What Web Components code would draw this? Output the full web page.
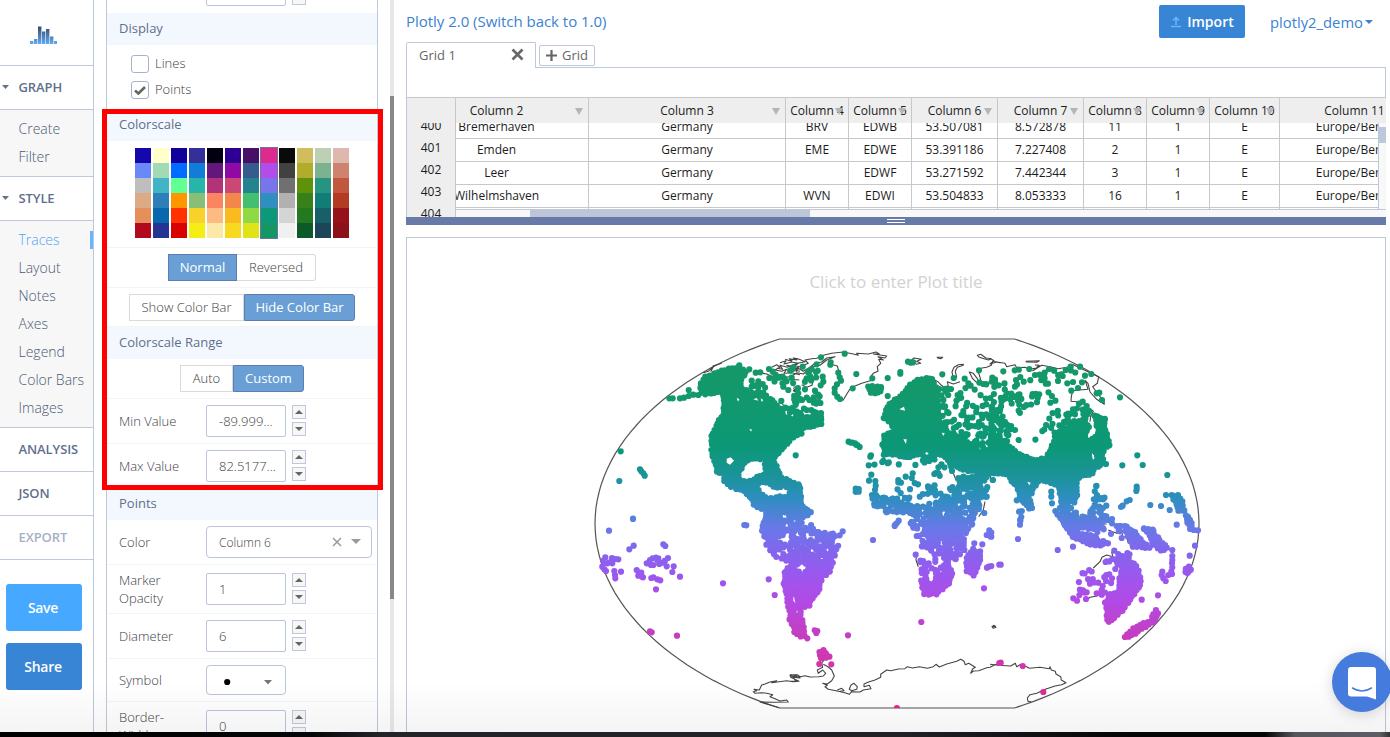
<!DOCTYPE html>
<html lang="en">
<head>
<meta charset="utf-8">
<title>Plotly 2.0</title>
<style>
html,body{margin:0;height:100%;overflow:hidden;background:#fff;font-family:"Open Sans","Noto Sans",sans-serif}
</style>
</head>
<body>
<plot-workspace></plot-workspace>
<script>
const define = (name, html, setup) => customElements.define(name, class extends HTMLElement {
  constructor() {
    super();
    this.attachShadow({ mode: 'open' });
  }
  connectedCallback() {
    const t = document.createElement('template');
    t.innerHTML = typeof html === 'function' ? html(this) : html;
    this.shadowRoot.replaceChildren(t.content.cloneNode(true));
    if (setup) setup(this);
  }
});

/* ---------- left navigation ---------- */
define('nav-head', el => `
<style>
:host{display:flex;align-items:center;box-sizing:border-box;height:44px;padding-bottom:2px;border-bottom:1px solid #bdc8d9;background:#fff;color:#5f6f8d;font-size:13px;font-weight:600;letter-spacing:-.1px}
:host([muted]){color:#a6b1c6}
i{width:18.500px;flex:none;display:flex}
svg{margin:2px 0 0 1px}
</style><i>${el.hasAttribute('open') ? '<svg width="9" height="5"><path d="M1 0h7L4.500 4z" fill="#64748f"/></svg>' : ''}</i><slot></slot>`);

define('nav-item', `
<style>
:host{display:flex;align-items:center;justify-content:space-between;height:28px;padding-left:18.500px;color:#4b5a76;font-size:14px;font-weight:300;white-space:nowrap}
:host([active]){color:#4fa4fb}
span{padding-bottom:2px}
i{width:3px;height:18px;flex:none}
:host([active]) i{background:#69b3ff}
</style><span><slot></slot></span><i></i>`);

define('nav-list', `
<style>:host{display:block;padding:5px 0;background:#f7f7f7;border-bottom:1px solid #bdc8d9}</style><slot></slot>`);

define('side-nav', `
<style>
:host{display:block;box-sizing:border-box;width:94px;border-right:1px solid #bdc8d9;height:732px;overflow:hidden;flex:none}
.logo{height:65px;border-bottom:1px solid #bdc8d9;box-sizing:content-box}
.logo svg{display:block;margin-left:30px;padding-top:25px}
button{display:block;width:76px;height:47px;margin:0 0 12px 6px;padding:0 2px 0 0;border:0;border-radius:3px;color:#fff;font:600 14px "Open Sans",sans-serif;letter-spacing:-.3px;background:#46a8ff}
button:first-of-type{margin-top:24px}
.share{background:#3985d5}
</style>
<div class="logo"><svg width="27" height="20" viewBox="0 0 27 20"><defs><linearGradient id="b" gradientUnits="userSpaceOnUse" x1="0" y1="2" x2="0" y2="19"><stop offset="0" stop-color="#3a4d70"/><stop offset="1" stop-color="#62aaf2"/></linearGradient></defs>
<path fill="url(#b)" d="M0 16h3.400v3H0zM4 14h3.400v5H4zM8 1.500h3.400V19H8zM12 6.500h3.400V19H12zM16 4h3.400v15H16zM20 11.500h3.400V19H20zM24 16h3v3h-3z"/></svg></div>
<nav-head open>GRAPH</nav-head>
<nav-list><nav-item>Create</nav-item><nav-item>Filter</nav-item></nav-list>
<nav-head open>STYLE</nav-head>
<nav-list><nav-item active>Traces</nav-item><nav-item>Layout</nav-item><nav-item>Notes</nav-item><nav-item>Axes</nav-item><nav-item>Legend</nav-item><nav-item>Color Bars</nav-item><nav-item>Images</nav-item></nav-list>
<nav-head>ANALYSIS</nav-head><nav-head>JSON</nav-head><nav-head muted>EXPORT</nav-head>
<button>Save</button><button class="share">Share</button>`);

/* ---------- style panel controls ---------- */
define('panel-head', `
<style>:host{display:flex;align-items:center;box-sizing:border-box;height:32px;padding:0 0 2px 12px;background:#f3f8fe;color:#5f6f8d;font-size:13px}</style><slot></slot>`);

define('panel-row', el => `
<style>
:host{display:flex;box-sizing:border-box;align-items:center;height:var(--h,45px);border-bottom:1px solid #f3f4f5;padding-left:12px;color:#3c4046;font-size:13px;font-weight:300}
:host([center]){padding:0;justify-content:center}
label{width:87px;flex:none;line-height:18px}
</style>${el.hasAttribute('label') ? `<label>${el.getAttribute('label')}</label>` : ''}<slot></slot>`);

define('number-box', el => `
<style>
:host{display:flex;gap:6px;align-items:flex-start}
.v{box-sizing:border-box;width:80px;height:32px;border:1px solid #bac5dc;border-radius:2px;background:#fff;padding-left:12px;line-height:31px;font-size:13px;color:#404040}
.s{display:flex;flex-direction:column;gap:3px}
.s i{display:flex;align-items:center;justify-content:center;box-sizing:border-box;width:14px;height:14px;border:1px solid #c0c9dc;background:#f7f7f7}
</style><div class="v">${el.getAttribute('value')}</div><div class="s"><i><svg width="8" height="4"><path d="M0 4h8L4 0z" fill="#666"/></svg></i><i><svg width="8" height="4"><path d="M0 0h8L4 4z" fill="#666"/></svg></i></div>`);

define('check-box', el => `
<style>
:host{display:flex;align-items:center;height:26px;padding-left:24px;color:#3c4046;font-size:13px;font-weight:300}
i{display:flex;align-items:center;justify-content:center;box-sizing:border-box;width:18px;height:18px;border:1px solid #a5b3cb;border-radius:3px;margin-right:6px}
span{padding-bottom:2px}
</style><i>${el.hasAttribute('checked') ? '<svg width="12" height="9"><path d="M1 4.500 4.400 7.500 11 1" fill="none" stroke="#666" stroke-width="2.600"/></svg>' : ''}</i><span><slot></slot></span>`);

define('toggle-pair', el => {
  const [a, b, wa, wb, on] = el.getAttribute('spec').split('|');
  return `<style>
:host{display:flex;height:27px;font-size:13px;line-height:25px;text-align:center;color:#404040}
span{box-sizing:border-box;border:1px solid #dadada;background:#fff;font-weight:300}
span:first-child{border-radius:3px 0 0 3px;border-right:0}span:last-child{border-radius:0 3px 3px 0;border-left:0}
span.on{background:#699fd5;border:1px solid #5d7cb0;color:#fff;font-weight:400}
</style><span style="width:${wa}px" class="${on == 0 ? 'on' : ''}">${a}</span><span style="width:${wb}px" class="${on == 1 ? 'on' : ''}">${b}</span>`;
});

define('color-scales', () => {
  const scales = ['#1408ad #6889f7 #bebebe #dcaa85 #e5905a #b00a1c','#ffffcb #a1dab4 #41b5c5 #2c7fb8 #0768ac #253393','#110099 #006cff #62ff94 #ff9600 #ff3200 #d90000','#352f9a #127cd9 #27b5a9 #87bf77 #f9d12b #f5ee14','#020010 #63177d #b13478 #fb8461 #febb81 #fce9a9','#2d0093 #8f09a4 #cb4876 #f38749 #fbba20 #f9d822','#451065 #365c8d #25838e #44bf71 #8fd944 #dfe318','#de2a8c #b24deb #7874eb #2e8fc1 #0c9879 #149764','#0a0a0a #414141 #707070 #b1b1b1 #d5d5d5 #f0f0f0','#d0bd5d #b1ac29 #5e920b #37801a #247820 #0d5a29','#bdcfb5 #7cb38e #279381 #117d76 #195f69 #1c455a','#deb7ae #cf826e #c1583d #b33b23 #96111a #8d1119'];
  return `<style>
:host{display:flex;gap:2px;height:90px;padding:0;margin-top:-3px}
div{width:16px;display:flex;flex-direction:column}
i{flex:1}
.sel{box-shadow:0 0 0 1px #66769c}
</style>` + scales.map((s, n) => `<div class="${n === 7 ? 'sel' : ''}">${s.split(' ').map(c => `<i style="background:${c}"></i>`).join('')}</div>`).join('');
});

define('select-box', el => `
<style>
:host{display:flex;align-items:center;box-sizing:border-box;width:80px;height:30px;border:1px solid #bac5dc;border-radius:4px;background:#fff;padding:0 12px 0 17px;justify-content:space-between}
:host([wide]){width:166px;height:32px;padding:0 10px 0 12px;font-size:12px;color:#404040}
div{display:flex;gap:9px;align-items:center}
</style>${el.hasAttribute('wide') ? '<slot></slot><div><svg width="10" height="10"><path d="M1 1l8 8M9 1L1 9" stroke="#999" stroke-width="1.500"/></svg><svg width="10" height="7"><path d="M0 0h10L5 5z" fill="#999"/></svg></div>' : '<svg width="8" height="8" style="margin-top:3px"><circle cx="3.200" cy="4" r="3.100"/></svg><svg width="10" height="5" style="margin-top:5px"><path d="M1 0h8L5 4.500z" fill="#777"/></svg>'}`);

define('style-panel', `
<style>
:host{display:block;position:relative;width:300px;margin-left:12px;height:732px;flex:none;overflow:visible}
.view{height:732px;overflow:hidden;display:flex;justify-content:space-between}
.col{box-sizing:border-box;width:272px;border:solid #bdc8d9;border-width:0 1px}
.track{width:4px;margin-right:12px;background:#e8e8e8;flex:none}
.track i{display:block;margin-top:96px;height:503px;background:#888}
.checks{height:64px;box-sizing:border-box;padding-top:6px}
.first{height:13px;display:flex;align-items:flex-end}
.first number-box{margin:0 0 7px 99px}
.callout{position:absolute;left:-4px;top:109px;width:281px;height:381px;border:5px solid #fe0000;box-sizing:border-box}
</style>
<div class="view"><div class="col">
<div class="first"><number-box value=""></number-box></div>
<panel-head>Display</panel-head>
<div class="checks"><check-box>Lines</check-box><check-box checked>Points</check-box></div>
<panel-head>Colorscale</panel-head>
<panel-row center style="--h:107px"><color-scales></color-scales></panel-row>
<panel-row center style="--h:40px"><toggle-pair spec="Normal|Reversed|69|79|0"></toggle-pair></panel-row>
<panel-row center style="--h:39px"><toggle-pair spec="Show Color Bar|Hide Color Bar|115|111|1"></toggle-pair></panel-row>
<panel-head>Colorscale Range</panel-head>
<panel-row center style="--h:40px"><toggle-pair spec="Auto|Custom|53|71|1"></toggle-pair></panel-row>
<panel-row label="Min Value"><number-box value="-89.999..."></number-box></panel-row>
<panel-row label="Max Value" style="--h:44px"><number-box value="82.5177..."></number-box></panel-row>
<panel-head>Points</panel-head>
<panel-row label="Color"><select-box wide>Column 6</select-box></panel-row>
<panel-row label="Marker&lt;br>Opacity" style="--h:49px"><number-box value="1"></number-box></panel-row>
<panel-row label="Diameter"><number-box value="6"></number-box></panel-row>
<panel-row label="Symbol" style="--h:43px"><select-box></select-box></panel-row>
<panel-row label="Border-&lt;br>Width" style="--h:49px"><number-box value="0"></number-box></panel-row>
</div><div class="track"><i></i></div></div>
<div class="callout"></div>`);

/* ---------- header and data grid ---------- */
define('top-bar', `
<style>
:host{display:flex;align-items:center;height:42px;box-sizing:border-box;padding:1px 13px 0 0;color:#3b82d2;font-size:14.800px}
.t{flex:1;font-size:15px;letter-spacing:-.03px;padding-bottom:2px}
button{display:flex;align-items:center;justify-content:center;gap:5px;width:86px;height:33px;margin:0 25px 0 0;padding:0;border:0;border-radius:2px;background:#3985d5;color:#fff;font:600 14px "Open Sans",sans-serif}
.u{display:flex;align-items:center;gap:2px}
</style>
<span class="t">Plotly 2.0 (Switch back to 1.0)</span>
<button><svg width="12" height="12"><path d="M1 10.500h10M6 9V2M3 4.500 6 1.500 9 4.500" fill="none" stroke="#6db5fb" stroke-width="1.500"/></svg>Import</button>
<span class="u">plotly2_demo<svg width="8" height="4"><path d="M0 0h8L4 4z" fill="#3b82d2"/></svg></span>`);

define('grid-tabs', `
<style>
:host{display:flex;height:26px;align-items:flex-end;font-size:13px;color:#666}
.a{display:flex;justify-content:space-between;align-items:center;box-sizing:border-box;width:130px;height:26px;border:1px solid #bdc8d9;border-bottom:0;border-radius:2px 2px 0 0;padding:0 11px 2px 12px}
.g{flex:1;display:flex;height:26px;box-sizing:border-box;border-bottom:1px solid #bdc8d9;padding:3px 0 0 3px}
.b{display:flex;align-items:center;gap:5px;box-sizing:border-box;width:56px;height:21px;border:1px solid #bdc8d9;border-radius:2px;padding:0 0 1px 6px}
</style>
<div class="a">Grid 1<svg width="13" height="13"><path d="M1.500 1.500l10 10M11.500 1.500l-10 10" stroke="#666" stroke-width="2.600"/></svg></div>
<div class="g"><div class="b"><svg width="11" height="11"><path d="M5.500 0v11M0 5.500h11" stroke="#666" stroke-width="2.200"/></svg>Grid</div></div>`);

define('data-grid', () => {
  const cols = [184, 197, 63, 63, 86, 86, 63, 63, 70, 150];
  const rows = [['Bremerhaven','Germany','BRV','EDWB','53.507081','8.572878','11','1','E','Europe/Berlin'],['Emden','Germany','EME','EDWE','53.391186','7.227408','2','1','E','Europe/Berlin'],['Leer','Germany','','EDWF','53.271592','7.442344','3','1','E','Europe/Berlin'],['Wilhelmshaven','Germany','WVN','EDWI','53.504833','8.053333','16','1','E','Europe/Berlin'],['','','','','','','','','','']];
  return `<style>
:host{display:flex;flex-direction:column;height:157px;font-size:12px;color:#1c1c1c}
.bar{height:29px;border:solid #bdc8d9;border-width:0 1px}
.table{height:120px;display:grid;grid-template:26px 86px 8px/50px 1fr;overflow:hidden}
.corner,.head{background:#eee;border-top:1px solid #c8c8c8}
.corner,.idx{border-left:1px solid #bdc8d9;border-right:1px solid #c8c8c8;background:#eee}
.head,.body{overflow:hidden;min-width:0}
.line{display:grid;grid-template-columns:${cols.map(c => c + 'px').join(' ')};margin-left:-51px;width:1025px}
.line span{box-sizing:border-box;border-right:1px solid #c8c8c8;text-align:center;white-space:nowrap;position:relative}
.head .line{height:26px;line-height:26px}
.head svg{position:absolute;right:5px;top:10px}
.body{display:grid;grid-template-columns:1fr 8px}
.cells{overflow:hidden;min-width:0}
.cells .line{height:23px;line-height:23px}
.cells .line span{border-bottom:1px solid #c8c8c8}
.cells .line:first-child{margin-top:-8px}
.idx{grid-row:2/4;grid-column:1;overflow:hidden;text-align:center}
.idx div{height:22px;line-height:22px}
.idx div:first-child{margin-top:-8px}
.vs{box-sizing:border-box;border-left:1px solid #bdc8d9;background:#f8f8f8;padding-top:4px}
.vs i{display:block;height:16px;background:#bdc8d9}
.hs{box-sizing:border-box;border-top:1px solid #bdc8d9;background:#f8f8f8}
.hs i{display:block;width:280px;height:8px;margin-left:74px;background:#bdc6d8}
.split{height:8px;background:#687ba8;display:flex;flex-direction:column;align-items:center;gap:2px}
.split i{width:18px;height:1px;background:#fff}
.split i:first-child{margin-top:2px}
</style>
<div class="bar"></div>
<div class="table"><div class="corner"></div>
<div class="head"><div class="line">${cols.map((c, n) => `<span>Column ${n + 2}<svg width="8" height="7"><path d="M0 0h8L4 7z" fill="#b5b5b5"/></svg></span>`).join('')}</div></div>
<div class="idx">${[400, 401, 402, 403, 404].map(n => `<div>${n}</div>`).join('')}</div>
<div class="body"><div class="cells">${rows.map(r => `<div class="line">${r.map(v => `<span>${v}</span>`).join('')}</div>`).join('')}</div><div class="vs"><i></i></div></div>
<div class="hs"><i></i></div></div>
<div class="split"><i></i><i></i></div>`;
});

/* ---------- world map, Winkel tripel projection ---------- */
define('geo-scatter', `
<style>:host{display:block}svg{display:block}</style>
<svg width="978" height="495" viewBox="407 238 978 495">
<defs><linearGradient id="lat" gradientUnits="userSpaceOnUse" x1="0" y1="345" x2="0" y2="710">
<stop offset="0" stop-color="#179862"/><stop offset=".28" stop-color="#0c9877"/><stop offset=".36" stop-color="#1b939a"/><stop offset=".42" stop-color="#2e8ec0"/><stop offset=".5" stop-color="#6879e8"/><stop offset=".56" stop-color="#8166ed"/><stop offset=".63" stop-color="#9b57ee"/><stop offset=".7" stop-color="#b14ae6"/><stop offset=".8" stop-color="#c63dbf"/><stop offset=".9" stop-color="#d832a6"/><stop offset="1" stop-color="#e0288a"/></linearGradient></defs>
<path id="frame" fill="none" stroke="#555" stroke-width="1.200"/>
<path id="coast" fill="none" stroke="#444" stroke-width="1.100" stroke-linejoin="round"/>
<path id="solid" fill="url(#lat)"/>
<path id="gaps" fill="#fff"/>
<path id="dots" fill="url(#lat)"/>
</svg>`, el => {
  const $ = id => el.shadowRoot.getElementById(id);
  /* each sheet has its own origin; three units make one pixel */
  const O = { A: [580, 330], B: [790, 330], C: [990, 330], D: [580, 520], E: [790, 520], F: [990, 520] };
  const pts = s => { const o = O[s[0]]; return s.slice(1).trim().split(/\s+/).map(p => { const [x, y] = p.split(',').map(Number); return [o[0] + x / 3, o[1] + y / 3]; }); };
  const path = (p, close) => 'M' + p.map(q => q[0].toFixed(1) + ' ' + q[1].toFixed(1)).join('L') + (close ? 'Z' : '');
  let seed = 7;
  const rnd = () => (seed = (seed * 16807) % 2147483647) / 2147483647;
  let dots = '';
  const dot = (x, y) => { dots += `M${(x - 3.1).toFixed(1)} ${y.toFixed(1)}a3.1 3.1 0 1 0 6.200 0a3.1 3.1 0 1 0 -6.200 0`; };

  const frame = [];
  const edge = (lon, lat) => { const a = Math.acos(Math.cos(lat) * Math.cos(lon / 2)), k = a ? a / Math.sin(a) : 1; return [897 + 117.46 * .5 * (lon * 2 / Math.PI + 2 * Math.cos(lat) * Math.sin(lon / 2) * k), 523.5 - 117.46 * .5 * (lat + Math.sin(lat) * k)]; };
  for (let i = 0; i <= 60; i++) frame.push(edge(Math.PI, (90 - i * 3) * Math.PI / 180));
  for (let i = 60; i >= 0; i--) frame.push(edge(-Math.PI, (90 - i * 3) * Math.PI / 180));
  $('frame').setAttribute('d', path(frame, true));

  const solids = [
    'A365,158 378,142 402,130 435,120 478,110 496,126 482,150 485,175 520,190 548,190 570,205 598,235 610,260 640,268 662,250 662,312 640,322 610,348 598,370 576,390 606,440 655,462 662,475 662,510 650,560 640,540 615,548 600,545 600,600 545,600 558,560 557,542 522,525 517,505 480,478 455,472 435,455 430,430 412,425 404,392 396,370 396,320 407,290 431,255 431,200 425,183 380,190 362,176',
    'B0,463 16,465 22,500 36,530 62,548 40,560 0,560 0,540 14,540 8,500 0,500',
    'B0,270 30,268 75,258 92,250 92,282 60,288 20,302 0,314',
    'B362,165 385,152 410,143 425,148 437,170 442,200 445,240 452,290 475,310 500,322 540,340 570,365 600,355 632,340 632,425 600,430 560,425 520,420 480,400 460,374 430,372 408,352 395,370 360,382 320,375 282,368 279,345 284,317 312,302 303,278 280,262 292,232 312,210 340,193',
    'C0,330 40,335 85,370 130,390 170,385 188,345 195,310 240,290 278,268 296,290 280,330 285,345 305,362 322,370 320,400 306,432 275,435 262,450 262,495 252,516 240,512 225,540 208,535 218,525 203,465 150,448 128,475 118,500 128,535 118,536 95,510 82,470 50,433 0,430',
    'C314,258 342,268 345,300 360,346 340,352 336,398 325,410 323,390 333,362 302,345 294,332 328,318 325,300',
    'F240,38 300,45 325,60 350,70 330,76 290,70 250,50',
    'F405,35 418,28 436,36 450,60 478,84 455,82 430,82 416,50', 'F462,28 488,35 510,60 532,85 512,90 490,75 478,45',
    'F392,165 430,130 445,150 454,185 442,210 398,270 356,306 350,298 355,275 345,250 360,222 385,215 388,185',
    'F405,349 430,327 485,300 496,270 502,278 494,302 455,328 415,350', 'F585,146 597,140 603,150 593,160 585,156',
    'C545,498 565,495 577,515 583,540 567,540 556,515', 'C588,555 600,570 608,598 599,598',
    'E392,180 430,195 440,172 470,160 482,170 475,190 438,222 405,224',
    'E530,115 548,88 558,100 572,92 570,120 550,166 530,152',
    'D620,160 640,150 660,180 660,350 645,335 634,285 620,235 612,190',
    'E0,170 40,165 60,140 122,140 118,156 96,170 86,205 70,235 56,255 30,262 36,310 45,345 30,342 0,300',
    'E88,398 102,392 118,408 95,416', 'B235,168 275,170 272,185 245,190', 'B174,334 193,338 208,350', 'B198,477 207,477 207,487 198,487'
  ];
  /* inland waters and thinly served pockets; the first three are ringed with dots */
  const gaps = [
    'A472,444 486,404 515,386 555,388 560,428 532,442 500,456', 'A526,462 548,454 590,472 644,472 648,498 600,500 562,508 540,490', 'B386,362 405,342 434,370 408,384',
    'A597,548 606,560 616,560 612,548', 'A622,550 634,558 636,570 625,568',
    'A490,152 500,165 498,180 486,176', 'A520,208 530,204 535,212', 'A542,205 550,210 545,216', 'A470,203 478,208 474,215', 'A440,386 452,382 462,392 450,404 440,398', 'A508,298 515,298 514,305',
    'B328,238 342,230 345,242', 'B340,328 350,328 348,342', 'B455,308 465,308 460,318', 'B430,380 470,384 478,402 440,398', 'B495,432 510,450 500,460', 'C305,368 322,368 320,388 308,388', 'C112,455 122,458 118,466', 'C305,300 325,300 322,318 308,318',
    'E408,178 420,180 416,195', 'D625,200 636,196 636,212', 'E20,180 30,178 28,205 20,200', 'E5,235 12,230 16,250', 'D640,165 652,165 648,185', 'E22,255 30,270 20,280'
  ];
  $('solid').setAttribute('d', solids.map(s => path(pts(s), true)).join(''));
  $('gaps').setAttribute('d', gaps.map(s => path(pts(s), true)).join(''));
  solids.concat(gaps.slice(0, 3)).forEach(s => { const p = pts(s); p.forEach((a, i) => { const b = p[(i + 1) % p.length], l = Math.hypot(b[0] - a[0], b[1] - a[1]), n = Math.ceil(l / 4.5); for (let k = 0; k < n; k++) dot(a[0] + (b[0] - a[0]) * k / n + rnd() * 1.6 - .8, a[1] + (b[1] - a[1]) * k / n + rnd() * 1.6 - .8); }); });

  const inside = (p, x, y) => { let c = false; for (let i = 0, j = p.length - 1; i < p.length; j = i++) if ((p[i][1] > y) !== (p[j][1] > y) && x < (p[j][0] - p[i][0]) * (y - p[i][1]) / (p[j][1] - p[i][1]) + p[i][0]) c = !c; return c; };
  /* [coverage, outline]: airports scattered over thinly served land */
  [
    [1, 'B445,180 480,170 540,215 630,240 632,345 570,355 500,320 455,290'],
    [.5, 'B450,165 540,155 600,160 632,200 632,250 540,220 480,215 445,190'],
    [.65, 'C0,190 60,190 130,180 200,185 215,215 290,220 300,260 250,270 235,290 160,300 140,260 100,260 60,300 20,330 0,330'],
    [.32, 'C0,120 75,120 120,115 225,120 270,110 280,160 240,180 130,175 60,185 0,190'],
    [.25, 'C60,300 200,290 185,320 140,340 80,340'],
    [1, 'C0,250 50,260 60,320 90,365 60,360 0,340'],
    [.9, 'C240,240 300,240 290,280 230,290 200,300 200,260'],
    [.9, 'B240,385 290,370 320,385 290,405 240,410'],
    [.6, 'B320,385 430,385 490,400 500,425 440,415 370,418 320,405'],
    [.3, 'B325,435 450,430 450,500 340,490 300,470'],
    [3, 'B236,480 250,472 280,500 330,505 350,520 385,540 385,560 345,548 290,550 255,532'],
    [2.3, 'B355,525 400,530 450,545 455,600 365,600 352,578 380,560'],
    [2.4, 'B450,490 490,470 500,440 595,435 590,500 560,560 545,600 450,600'],
    [.9, 'B320,490 440,480 450,540 390,540'],
    [2.4, 'E358,5 540,5 528,40 528,95 500,85 440,60 385,50'],
    [1.6, 'E380,45 440,55 528,80 520,100 500,125 492,165 470,165 430,170 400,185 385,120'],
    [3, 'D548,0 655,0 660,20 600,50 605,100 600,125 565,88 540,40'],
    [1.4, 'D600,40 660,20 660,170 610,165 603,100'],
    [1.7, 'E0,0 60,10 110,28 152,45 135,90 125,148 50,150 0,170'],
    [1.8, 'E80,35 152,45 130,140 105,110'],
    [1.8, 'D625,100 660,110 660,200 615,200'],
    [.9, 'F270,145 310,145 308,175 295,215 265,235 250,240 262,190'],
    [.45, 'F310,160 385,165 385,205 340,228 300,225'],
    [1.8, 'F372,92 402,92 428,90 440,130 445,150 395,170 380,130'], [1.8, 'F320,130 385,105 380,135'],
    [2.4, 'F210,0 290,-15 330,0 340,25 300,30 240,38 230,20'],
    [.9, 'F310,0 345,0 350,40 390,10 410,30 400,60 320,50'],
    [2.6, 'C195,545 240,525 268,560 280,575 320,580 320,600 230,600 208,572'],
    [2, 'C310,450 322,458 328,485 350,500 352,540 350,575 300,590 275,575 290,552 312,530'],
    [2.2, 'C82,538 96,538 95,585 86,585'],
    [.8, 'A500,140 560,160 560,185 520,190 505,175'],
    [.5, 'A560,125 650,140 640,200 575,160'],
    [1.1, 'A595,215 660,190 660,260 610,250'],
    [.7, 'B0,200 90,190 95,250 40,265 0,270'],
    [.5, 'B0,110 90,120 90,160 30,190 0,170']
  ].forEach(([c, s]) => {
    const p = pts(s), xs = p.map(q => q[0]), ys = p.map(q => q[1]);
    let area = 0; p.forEach((a, i) => { const b = p[(i + 1) % p.length]; area += a[0] * b[1] - b[0] * a[1]; });
    let n = Math.round(Math.abs(area / 2) * c / 29), x0 = Math.min(...xs), x1 = Math.max(...xs), y0 = Math.min(...ys), y1 = Math.max(...ys);
    while (n > 0) { const x = x0 + rnd() * (x1 - x0), y = y0 + rnd() * (y1 - y0); if (inside(p, x, y)) { dot(x, y); n--; } }
  });
  [
    'A268,205 278,205 300,205 312,203 326,180 326,198 340,194 355,195 365,188 376,193 122,364 118,453 180,418 184,424 190,430 194,437 159,566 87,602 493,585 499,586 647,376 376,140 508,118 527,128 541,127 567,117 578,125 568,144 597,143 608,140 635,143 610,170 625,180 515,152 515,170 530,165 548,162 418,428 403,393 450,120 478,106',
    'B38,110 58,122 78,126 80,103 93,82 122,97 121,104 50,145 98,140 100,155 92,166 75,182 45,178 25,190 15,215 58,210 50,240 70,245 145,128 149,142 153,152 141,163 134,175 134,188 142,200 150,207 188,175 199,132 247,145 164,71 293,198 293,144 331,126 331,131 354,95 362,98 370,97 457,133 491,144 524,146 567,121 607,143 615,155 448,177 465,180 483,177 17,376 243,376 241,380 236,406 244,434 237,452 256,453 257,467 325,450 325,457 347,440 368,430 384,463 414,469 437,429 433,432 445,430 583,549 598,601 548,567 590,500 609,450 318,582 326,572 314,588',
    'C40,124 74,121 118,117 177,117 164,128 162,138 91,141 101,155 15,148 26,166 75,170 50,190 38,210 242,110 227,120 214,133 270,110 285,137 304,132 276,157 264,174 244,182 232,160 249,156 320,190 328,188 336,210 390,202 278,215 290,228 298,243 345,268 442,376 397,406 458,405 532,435 348,402 440,470 439,483 440,478 393,531 398,527 410,514 419,510 481,525 513,528 539,540 560,584 528,495 545,495 80,511 184,485 184,500 186,520 196,543 8,450 366,567 380,588 392,588 404,588 410,590 462,595 475,597 488,599',
    'D494,15 87,32 159,-3 161,77 148,88 250,73 256,78 67,140 73,148 78,153 76,112 70,122 82,130 96,114 108,117 115,118 97,130 88,127 103,153 105,165 106,175 123,155 170,150 178,160 184,158 175,167 186,170 189,172 200,130 208,128 210,120 218,115 228,113 235,115 213,135 220,135 232,120 238,132 248,128 255,122 264,114 260,139 281,139 277,156 300,170 214,174 220,172 232,178 241,181 228,208 429,190 210,334 215,337 291,347 566,178 584,225',
    'E158,34 249,60 320,10 314,16 394,306 174,346 74,331 82,333 79,339 88,432 124,433 105,398 52,355 582,205 591,143 596,140 604,138 553,70 577,73 598,33 590,45 602,50 600,40 628,134 628,429 377,104 380,48',
    'F4,38 4,50 84,57 90,0 90,14 32,134 4,138 203,90 249,80 354,70 376,147 358,163 366,175 348,183 325,188 290,217 320,220 335,224 261,242 250,235 288,237 455,239 504,226 615,77 599,107 624,31 547,90 547,108 547,120 546,130 547,142 544,155 546,162 535,165 517,155 515,165 520,175 527,183 605,25 598,10 592,3 612,30 560,14 462,25 32,428 98,438 160,516 353,0 366,10'
  ].forEach(s => pts(s).forEach(p => dot(p[0], p[1])));
  dots += 'M893.800 708.100a3.100 3.100 0 1 1 6.200 0z';
  $('dots').setAttribute('d', dots);

  $('coast').setAttribute('d', [
    'D598,563 540,546 580,547 625,546 620,540 600,543 585,536 570,530 578,524 560,520 545,518 525,520 520,515 530,512 522,508 538,510 545,495 555,492 570,486 590,482 575,488 620,482 640,485 657,484 632,472 630,465 645,472 652,464 660,470',
    'E0,464 20,464 5,470 24,470 30,474 10,472 15,480 25,484 0,484', 'E25,472 45,467 60,471 85,470 100,468 107,460 98,450 85,460 82,450 98,442 95,430 102,420', 'E100,433 115,441 125,450 133,468 125,482 112,492 98,490 112,496 105,500 115,508 145,514 165,518 178,523 185,515 210,516 220,510 243,506 238,496 222,500 222,492 238,485 255,480 272,472 272,463 290,450 302,452 325,447 345,446 352,440 368,444 388,440 412,445 430,440 438,433 448,441 470,432 500,424 512,418 522,424 526,434 536,430 556,442 548,446 542,460 550,453 566,452 590,443 600,442 615,434 630,432',
    'E178,508 183,495 192,490 202,500 200,508 185,512Z', 'E142,510 155,505 162,512 150,514', 'E606,320 612,316 618,322 610,325Z', 'E606,320 618,319', 'E380,100 378,120 385,140', 'E0,300 12,330 35,350',
    'F0,433 25,436 62,438 76,430 80,440 90,434 110,440 118,445 150,442 178,446 180,440 184,450 196,454 198,462 212,470 214,480 228,488 215,494 195,498 168,507 140,520 120,524 112,534 114,544 124,546', 'F310,144 330,125 336,112 350,105 368,110 365,95', 'F290,240 300,232 322,228', 'F355,30 380,40 395,35 398,50 410,50 415,70 425,60', 'F320,5 335,0 330,12 350,12',
    'D625,290 632,312 640,335 655,350',
    'A370,128 385,124 400,110 392,125', 'A398,108 425,100', 'A540,128 560,132 580,140 600,148 620,150', 'A575,112 590,104 600,112 585,120 605,124 620,118 612,130 635,128 660,134', 'A600,98 618,92 612,102 635,96 655,100 640,110 620,106 648,118 625,116 660,124', 'A615,88 635,94 628,86 650,90 640,84 655,86', 'A580,125 592,132 612,136 598,142 640,140 630,148 658,150', 'A590,115 608,118 600,106 622,112 640,104 632,120 655,112 648,126', 'A640,170 655,175 640,182 655,190', 'A600,212 612,228 625,238 630,228',
    'B0,92 15,86 28,88 45,95 22,100 5,106 30,110 55,100 45,90 65,86 80,85 100,76 125,70 160,66 190,72 205,76 200,70 235,72 258,66 268,72 250,72 290,78 285,84 264,80 280,90 266,88 272,100 262,110 264,124 250,130 242,140 248,150 215,160 195,168 178,180 162,206 158,212', 'B5,118 28,116 40,124 60,112 75,100 95,96 110,84 135,80 110,90 90,106 65,110 40,132 22,128 8,136', 'B128,104 142,108 146,122', 'B40,148 52,142 70,148 66,166 50,172 35,164', 'B10,175 25,188 15,195', 'B70,190 90,192 80,208 84,215',
    'B362,92 372,84 394,88 380,94 392,100 378,103', 'B440,82 458,82 452,86 442,84', 'B430,148 445,156 452,164 462,172 475,168 472,155 490,162 510,155', 'B520,103 505,104 492,112 486,125 488,138 500,142 496,124 502,112 520,106Z', 'B562,76 572,73 588,84 604,86 595,90 568,82Z', 'B630,98 608,94 604,106 590,112 576,114 560,120 568,134 572,150 575,165 562,146 550,130 538,126 548,146 560,158', 'B490,430 500,455 512,472', 'B585,515 580,540 566,560', 'B600,410 602,450',
    'C0,85 12,92 0,102 20,96 45,100 50,110 75,104 80,113 105,112 118,118 140,114 128,122 155,106 180,110 205,116 230,112 250,104 300,128 326,140 322,160 308,170 318,184 330,200 342,210 343,223 320,208 300,186 294,160 286,152 294,178 268,180 248,182 244,200 243,214 268,216 275,213 298,235 310,244 302,258 300,275', 'C108,94 148,92 140,97 110,96Z', 'C135,105 148,106 140,112', 'C305,522 315,520', 'C352,575 368,585 360,572'
  ].map(s => path(pts(s.replace('Z', '')), s.endsWith('Z'))).join(''));
});

define('plot-area', `
<style>
:host{display:flex;margin-top:12px;height:495px;box-sizing:border-box;border:1px solid #bdc8d9;border-bottom:0;width:980px}
.w{display:grid;width:978px}
.w>*{grid-area:1/1}
h1{margin:33px 0 0;font-size:17px;line-height:22px;font-weight:400;letter-spacing:-.03px;color:#d2d2d2;text-align:center;height:22px;z-index:1}
</style><div class="w"><geo-scatter></geo-scatter><h1>Click to enter Plot title</h1></div>`);

define('chat-button', `
<style>
:host{position:absolute;left:1332px;top:652px;width:60px;height:60px;border-radius:50%;background:#447bdd;box-shadow:0 2px 14px rgba(0,0,0,.17)}
svg{display:block;margin:15px 0 0 16px}
</style><svg width="28" height="33"><path d="M3 0h22a3 3 0 0 1 3 3v29.500l-9-3H3a3 3 0 0 1-3-3V3a3 3 0 0 1 3-3z" fill="#fff"/><path d="M4.500 21q9.500 6 19 0" fill="none" stroke="#447bdd" stroke-width="1.500" stroke-linecap="round"/></svg>`);

define('plot-workspace', `
<style>
:host{display:block;position:relative;width:1390px;height:737px;overflow:hidden}
.page{display:flex;height:732px;overflow:hidden}
main{width:980px;flex:none}
.fade{position:absolute;left:0;right:0;top:682px;height:50px;background:linear-gradient(rgba(0,0,0,0),rgba(0,0,0,.045))}
.edge{height:5px;background:linear-gradient(90deg,#000 0,#050608 310px,#222428 380px,#202226 900px,#050507 1130px,#050507 1265px,#55555c 1295px,#5d5d65 1380px,#333 1390px)}
</style>
<div class="page"><side-nav></side-nav><style-panel></style-panel><main><top-bar></top-bar><grid-tabs></grid-tabs><data-grid></data-grid><plot-area></plot-area></main></div>
<div class="fade"></div><chat-button></chat-button><div class="edge"></div>`);
</script>
</body>
</html>
